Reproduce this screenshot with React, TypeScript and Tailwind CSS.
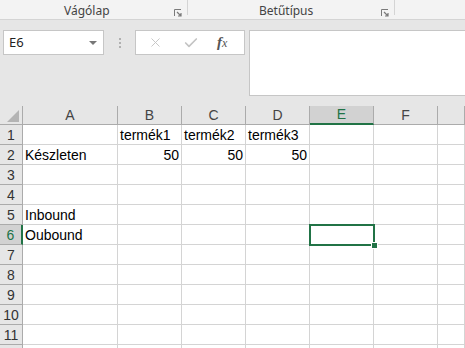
import { Check, X } from "lucide-react";

const cols = ["A", "B", "C", "D", "E", "F", ""];

type Cell = { text: string; right?: boolean };

const data: Record<number, Record<number, Cell>> = {
  1: { 1: { text: "termék1" }, 2: { text: "termék2" }, 3: { text: "termék3" } },
  2: {
    0: { text: "Készleten" },
    1: { text: "50", right: true },
    2: { text: "50", right: true },
    3: { text: "50", right: true },
  },
  5: { 0: { text: "Inbound" } },
  6: { 0: { text: "Oubound" } },
};

const Launcher = () => (
  <svg width="8" height="8" viewBox="0 0 8 8" className="text-[#7a7a7a]">
    <path d="M0.5 7V0.5H7" fill="none" stroke="currentColor" strokeWidth="1" />
    <path d="M3 3L7 7M7 4V7H4" fill="none" stroke="currentColor" strokeWidth="1.2" />
  </svg>
);

const App = () => {
  const rows = Array.from({ length: 12 }, (_, i) => i + 1);

  return (
    <div
      className="w-[465px] h-[348px] overflow-hidden bg-[#e6e6e6]"
      style={{ fontFamily: '"Liberation Sans", Arial, sans-serif' }}
    >
      {/* Ribbon group labels */}
      <div
        className="h-[20px] flex bg-[#f3f3f3] border-b border-[#d4d4d4] text-[12px] text-[#444]"
        style={{ fontFamily: '"Noto Sans", "Open Sans", sans-serif' }}
      >
        <div className="w-[188px] flex items-start">
          <span className="pl-[64px] leading-[21px]">Vágólap</span>
          <div className="flex-1" />
          <div className="pt-[9px] pr-[5px]">
            <Launcher />
          </div>
          <div className="w-px h-[15px] bg-[#d4d4d4]" />
        </div>
        <div className="w-[207px] flex items-start">
          <span className="pl-[71px] leading-[21px]">Betűtípus</span>
          <div className="flex-1" />
          <div className="pt-[9px] pr-[5px]">
            <Launcher />
          </div>
          <div className="w-px h-[15px] bg-[#d4d4d4]" />
        </div>
      </div>

      {/* Formula bar */}
      <div className="flex items-start pt-[10px] pb-[10px] h-[86px]">
        <div className="ml-[3px] w-[101px] h-[25px] bg-white border border-[#c6c6c6] flex items-center pl-[5px] pr-[6px]">
          <span className="text-[13px] text-[#222] flex-1" style={{ fontFamily: '"Noto Sans", sans-serif' }}>
            E6
          </span>
          <span className="w-0 h-0 border-l-[4px] border-r-[4px] border-t-[4px] border-l-transparent border-r-transparent border-t-[#777]" />
        </div>
        <div className="w-[31px] h-[25px] flex flex-col items-center justify-center gap-[2px]">
          <span className="w-[2px] h-[2px] bg-[#b0b0b0]" />
          <span className="w-[2px] h-[2px] bg-[#b0b0b0]" />
          <span className="w-[2px] h-[2px] bg-[#b0b0b0]" />
        </div>
        <div className="w-[110px] h-[25px] bg-white border border-[#c6c6c6] flex items-center">
          <X className="ml-[12px] w-[15px] h-[15px] text-[#c4c4c4]" strokeWidth={1.5} />
          <Check className="ml-[20px] w-[16px] h-[16px] text-[#c4c4c4]" strokeWidth={2.5} />
          <span
            className="ml-[18px] text-[15px] italic text-[#555]"
            style={{ fontFamily: '"Liberation Serif", "Times New Roman", serif' }}
          >
            <span className="font-semibold">f</span>
            <span className="text-[12px]">x</span>
          </span>
        </div>
        <div className="ml-[4px] flex-1 h-[66px] bg-white border border-[#c6c6c6] border-r-0" />
      </div>

      {/* Grid */}
      <div className="grid grid-cols-[23px_95px_64px_64px_64px_64px_64px_1fr] bg-white text-[14px] text-black">
        {/* header row */}
        <div className="h-[19px] bg-[#e6e6e6] border-r border-b border-[#ababab] relative">
          <svg width="12" height="12" viewBox="0 0 12 12" className="absolute right-[3px] bottom-[2px]">
            <polygon points="12,0 12,12 0,12" fill="#b4b4b4" />
          </svg>
        </div>
        {cols.map((c, i) => (
          <div
            key={c + i}
            className={
              c === "E"
                ? "h-[19px] bg-[#d2d2d2] border-r border-[#ababab] border-b-2 border-b-[#217346] text-[#217346] flex items-center justify-center"
                : "h-[19px] bg-[#e6e6e6] border-r border-b border-[#ababab] text-[#444] flex items-center justify-center"
            }
          >
            {c}
          </div>
        ))}

        {rows.map((r) => (
          <div key={r} className="contents">
            <div
              className={
                r === 6
                  ? "h-[20px] bg-[#d2d2d2] border-b border-[#ababab] border-r-2 border-r-[#217346] text-[#217346] flex items-end justify-center leading-[18px]"
                  : "h-[20px] bg-[#e6e6e6] border-r border-b border-[#ababab] text-[#333] flex items-end justify-center leading-[18px]"
              }
            >
              {r < 12 ? r : ""}
            </div>
            {cols.map((c, ci) => {
              const cell = data[r]?.[ci];
              return (
                <div
                  key={c + ci}
                  className={`h-[20px] border-r border-b border-[#d4d4d4] flex items-end leading-[18px] px-[2px] whitespace-nowrap relative ${
                    cell?.right ? "justify-end" : "justify-start"
                  }`}
                >
                  {cell?.text}
                  {r === 6 && c === "E" && (
                    <div className="absolute z-10 -left-[1px] -top-[1px] w-[66px] h-[22px] border-2 border-[#217346]">
                      <div className="absolute -right-[5px] -bottom-[5px] w-[7px] h-[7px] bg-[#217346] border border-white" />
                    </div>
                  )}
                </div>
              );
            })}
          </div>
        ))}
      </div>
    </div>
  );
};

export default App;
